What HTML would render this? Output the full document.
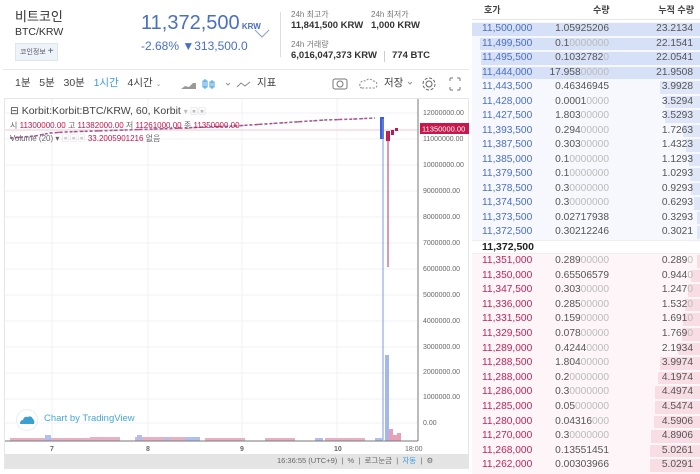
<!DOCTYPE html>
<html><head><meta charset="utf-8"><style>
*{margin:0;padding:0;box-sizing:border-box}
body{width:700px;height:474px;overflow:hidden;background:#fff;font-family:"Liberation Sans","Noto Sans CJK KR",sans-serif;position:relative;color:#333}
.a{position:absolute;white-space:nowrap;line-height:1.15}
.ob{position:absolute;left:472px;top:0;width:228px;height:474px;font-size:10.2px}
.row{position:absolute;left:0;width:228px;height:14.5px;line-height:14.5px}
.row .p{position:absolute;left:10px;top:0}
.row .q{position:absolute;left:74px;top:0;width:63px;text-align:right;color:#555}
.row .q span{color:#bbb}
.row .c{position:absolute;right:7px;top:0;color:#555}
.row .bar{position:absolute;right:0;top:1px;height:12.5px}
</style></head><body>
<!-- header -->
<div class="a" style="left:15px;top:10px;font-size:13px;color:#333">비트코인</div>
<div class="a" style="left:15px;top:26px;font-size:10.5px;color:#333">BTC/KRW</div>
<div class="a" style="left:15px;top:43px;width:43px;height:18px;background:#eef3fa;border:1px solid #dde5f0;font-size:7px;line-height:16px;padding-left:4px;color:#556">코인정보 <span style="font-size:10px">+</span></div>
<div class="a" style="left:141px;top:12px;font-size:20px;color:#4a6fc3">11,372,500<span style="font-size:8px;font-weight:bold"> KRW</span></div>
<div class="a" style="left:141px;top:40px;font-size:12px;color:#4a6fc3">-2.68% ▼313,500.0</div>
<svg class="a" style="left:254px;top:29px" width="16" height="10"><path d="M1 1 L8 8 L15 1" stroke="#8aa0c8" fill="none"/></svg>
<div class="a" style="left:280px;top:12px;width:1px;height:45px;background:#ddd"></div>
<div class="a" style="left:291px;top:10px;font-size:8px;color:#777">24h 최고가</div>
<div class="a" style="left:291px;top:21px;font-size:9.5px;font-weight:bold;color:#333">11,841,500 KRW</div>
<div class="a" style="left:371px;top:10px;font-size:8px;color:#777">24h 최저가</div>
<div class="a" style="left:371px;top:21px;font-size:9.5px;font-weight:bold;color:#333">1,000 KRW</div>
<div class="a" style="left:291px;top:40px;font-size:8px;color:#777">24h 거래량</div>
<div class="a" style="left:291px;top:51px;font-size:9.5px;font-weight:bold;color:#333">6,016,047,373 KRW</div>
<div class="a" style="left:384px;top:51px;width:1px;height:11px;background:#ccc"></div>
<div class="a" style="left:392px;top:51px;font-size:9.5px;font-weight:bold;color:#333">774 BTC</div>
<div class="a" style="left:3px;top:69px;width:466px;height:1px;background:#e8e8e8"></div>
<!-- toolbar -->
<div class="a" style="left:15px;top:77px;font-size:10.5px;color:#444">1분&nbsp;&nbsp; 5분&nbsp;&nbsp; 30분&nbsp;&nbsp; <span style="color:#3c9be0">1시간</span>&nbsp;&nbsp; 4시간 <span style="font-size:7px;color:#999">⌄</span></div>
<svg class="a" style="left:180px;top:77px" width="100" height="14"><path d="M1 12 L5 9 L9 10 L13 6 L16 6 L16 12Z" fill="#999"/><path d="M25 2V12M23 4h4v6h-4zM32 3v9M30 5h4v5h-4z" stroke="#3c9be0" fill="none"/><path d="M46 6l2 2 2-2" stroke="#999" fill="none"/><path d="M57 10 L61 6 L65 9 L70 5" stroke="#888" fill="none"/></svg>
<div class="a" style="left:257px;top:77px;font-size:10.5px;color:#444">지표</div>
<svg class="a" style="left:332px;top:76px" width="130" height="16"><rect x="1" y="3" width="14" height="10" rx="2" stroke="#777" fill="none"/><circle cx="8" cy="8" r="3" stroke="#777" fill="none"/><path d="M30 12 Q27 12 28 8 Q29 4 34 5 Q37 1 41 5 Q45 5 45 9 Q45 12 42 12Z" stroke="#888" fill="none" stroke-dasharray="2 1.5"/><path d="M76 6l2 2 2-2" stroke="#999" fill="none"/><circle cx="97" cy="8" r="3" stroke="#666" fill="none"/><circle cx="97" cy="8" r="6" stroke="#666" fill="none" stroke-dasharray="3 1.7"/><path d="M118 2h3M118 2v3M128 2h-3M128 2v3M118 14h3M118 14v-3M128 14h-3M128 14v-3" stroke="#777"/></svg>
<div class="a" style="left:384px;top:77px;font-size:10.5px;color:#444">저장</div>
<!-- chart -->
<div class="a" style="left:4px;top:98px;width:465px;height:371px;border:1px solid #e6e6e6"></div>
<svg class="a" style="left:5px;top:99px" width="464" height="356">
<g stroke="#f0f2f5"><path d="M0 14H413M0 40H413M0 66H413M0 92H413M0 118H413M0 144H413M0 170H413M0 196H413M0 222H413M0 248H413M0 274H413M0 300H413M0 324H413"/><path d="M47 0V342M143 0V342M237 0V342M332 0V342"/></g>
<path d="M0 31H413" stroke="#f3c7d3"/>
<polyline points="5,39 30,37 45,34 60,33 90,32 120,31 150,30 180,29 200,28 230,27 260,25 290,23 320,21 350,20 370,19" fill="none" stroke="#d0406a" stroke-width="1.5" stroke-dasharray="3 2"/>
<polyline points="5,39 30,37 45,34 60,33 90,32 120,31 150,30 180,29 200,28 230,27 260,25 290,23 320,21 350,20 370,19" fill="none" stroke="#5a7fd8" stroke-width="1.5" stroke-dasharray="2 6"/>
<rect x="375" y="18" width="4" height="22" fill="#3a5fd8"/><path d="M378 20V341" stroke="#7a9be0"/>
<rect x="380" y="256" width="4" height="86" fill="#a4b6ec"/>
<rect x="381" y="32" width="4" height="10" fill="#c0184a"/><path d="M383 32V168" stroke="#c03060"/>
<rect x="386" y="31" width="3" height="5" fill="#c0184a"/><rect x="390" y="29" width="3" height="3" fill="#c0184a"/>
<rect x="384" y="330" width="4" height="12" fill="#e8a0b8"/><rect x="388" y="336" width="4" height="6" fill="#e8a0b8"/><rect x="392" y="334" width="4" height="8" fill="#e8a0b8"/>
<g fill="#e8b0c4"><rect x="5" y="339" width="80" height="3"/><rect x="85" y="338" width="30" height="4"/><rect x="130" y="338" width="50" height="4"/><rect x="200" y="339" width="40" height="3"/><rect x="260" y="339" width="30" height="3"/><rect x="320" y="339" width="40" height="3"/></g>
<g fill="#b0c0ee"><rect x="40" y="336" width="6" height="6"/><rect x="132" y="336" width="5" height="6"/><rect x="160" y="338" width="4" height="4"/><rect x="180" y="338" width="15" height="4"/><rect x="310" y="339" width="8" height="3"/><rect x="370" y="339" width="8" height="3"/></g>
<path d="M413 0V342M0 342H413" stroke="#777"/>
<g font-size="7" fill="#666" font-family="Liberation Sans"><text x="418" y="16">12000000.00</text><text x="418" y="42">11000000.00</text><text x="418" y="68">10000000.00</text><text x="418" y="94">9000000.00</text><text x="418" y="120">8000000.00</text><text x="418" y="146">7000000.00</text><text x="418" y="172">6000000.00</text><text x="418" y="198">5000000.00</text><text x="418" y="224">4000000.00</text><text x="418" y="250">3000000.00</text><text x="418" y="275">2000000.00</text><text x="418" y="300">1000000.00</text><text x="418" y="326">0.00</text>
<text x="45" y="352" font-weight="bold">7</text><text x="141" y="352" font-weight="bold">8</text><text x="235" y="352" font-weight="bold">9</text><text x="329" y="352" font-weight="bold">10</text><text x="400" y="352">18:00</text></g>
<rect x="415" y="24" width="49" height="11" fill="#c8174d"/><text x="417" y="32.5" font-size="7.5" fill="#fff" font-family="Liberation Sans">11350000.00</text>
</svg>
<div class="a" style="left:10px;top:105px;font-size:10.5px;color:#444">⊟ Korbit:Korbit:BTC/KRW, 60, Korbit <span style="color:#bbb;font-size:8px">▾ ▣▣</span></div>
<div class="a" style="left:10px;top:121px;font-size:8px;color:#c0184a"><span style="color:#666">시</span> 11300000.00 <span style="color:#666">고</span> 11382000.00 <span style="color:#666">저</span> 11261000.00 <span style="color:#666">종</span> 11350000.00</div>
<div class="a" style="left:10px;top:134px;font-size:8px;color:#666">Volume (20) ▾ <span style="color:#ccc">▣▣▣</span> <span style="color:#c0184a">33.2005901216</span> 없음</div>
<div class="a" style="left:16px;top:409px;width:22px;height:22px;border-radius:50%;border:1px solid #e6eef2;background:#fff"></div>
<svg class="a" style="left:19px;top:414px" width="16" height="11"><path d="M1 10 Q1 6 4 6 Q5 2 9 3 Q12 1 14 5 Q16 7 15 10Z" fill="#3aa0d0"/></svg>
<div class="a" style="left:44px;top:414px;font-size:9.5px;color:#46a7d6">Chart by TradingView</div>
<div class="a" style="left:5px;top:454px;width:464px;height:14px;background:#e4e4e4;font-size:7.5px;color:#666;line-height:14px;padding-left:272px">16:36:55 (UTC+9) &nbsp;|&nbsp; % &nbsp;|&nbsp; 로그눈금 &nbsp;|&nbsp; <span style="color:#3c9be0">자동</span> &nbsp;|&nbsp; ⚙</div>
<!-- orderbook -->
<div class="ob">
<div style="position:absolute;left:0;top:0;width:228px;height:20px;border-bottom:1px solid #e6e6e6;font-size:9px;font-weight:bold;color:#444;line-height:20px"><span style="position:absolute;left:12px">호가</span><span style="position:absolute;left:121px">수량</span><span style="position:absolute;right:6px">누적 수량</span></div>
<div style="position:absolute;left:0;top:22px;width:228px;height:218px;background:#f6f8fd"></div>
<div style="position:absolute;left:0;top:240px;width:228px;height:14px;background:#fff;border-top:1px solid #eee;border-bottom:1px solid #eee"></div>
<div style="position:absolute;left:0;top:254px;width:228px;height:220px;background:#fdf5f7"></div>
<div id="asks"></div>
<div style="position:absolute;left:10px;top:240px;line-height:14px;font-weight:bold;font-size:10.5px;color:#222">11,372,500</div>
</div>
<script>
var A=[["11,500,000","1.05925206","","23.2134",228],["11,499,500","0.1","0000000","22.1541",220],["11,495,500","0.1032782","0","22.0541",219],["11,444,000","17.958","00000","21.9508",218],["11,443,500","0.46346945","","3.9928",40],["11,428,000","0.0001","0000","3.5294",35],["11,427,500","1.803","00000","3.5293",35],["11,393,500","0.294","00000","1.7263",17],["11,387,500","0.303","00000","1.4323",14],["11,385,000","0.1","0000000","1.1293",11],["11,379,500","0.1","0000000","1.0293",10],["11,378,500","0.3","0000000","0.9293",9],["11,374,500","0.3","0000000","0.6293",6],["11,373,500","0.02717938","","0.3293",3],["11,372,500","0.30212246","","0.3021",3]];
var B=[["11,351,000","0.289","00000","0.289","0",3],["11,350,000","0.65506579","","0.944","0",9],["11,347,500","0.303","00000","1.247","0",12],["11,336,000","0.285","00000","1.532","0",15],["11,331,500","0.159","00000","1.691","0",17],["11,329,500","0.078","00000","1.769","0",18],["11,289,000","0.4244","0000","2.1934","",22],["11,288,500","1.804","00000","3.9974","",40],["11,288,000","0.2","0000000","4.1974","",42],["11,286,000","0.3","0000000","4.4974","",45],["11,285,000","0.05","000000","4.5474","",45],["11,280,000","0.04316","000","4.5906","",46],["11,270,000","0.3","0000000","4.8906","",49],["11,268,000","0.13551451","","5.0261","",50],["11,262,000","0.00303966","","5.0291","",50]];
var h="";
A.forEach(function(r,i){var y=22+i*14.53;h+='<div class="row" style="top:'+y+'px"><div class="bar" style="width:'+r[4]+'px;background:'+(r[4]>200?'#d6e0f7':'#dfe6f7')+'"></div><span class="p" style="color:#4a6fc3">'+r[0]+'</span><span class="q">'+r[1]+'<span>'+r[2]+'</span></span><span class="c">'+r[3]+'</span></div>';});
B.forEach(function(r,i){var y=254+i*14.6;h+='<div class="row" style="top:'+y+'px"><div class="bar" style="width:'+r[5]+'px;background:#f8dde5"></div><span class="p" style="color:#c0245a">'+r[0]+'</span><span class="q">'+r[1]+'<span>'+r[2]+'</span></span><span class="c">'+r[3]+'<span style="color:#bbb">'+r[4]+'</span></span></div>';});
document.getElementById("asks").innerHTML=h;
</script>
</body></html>
